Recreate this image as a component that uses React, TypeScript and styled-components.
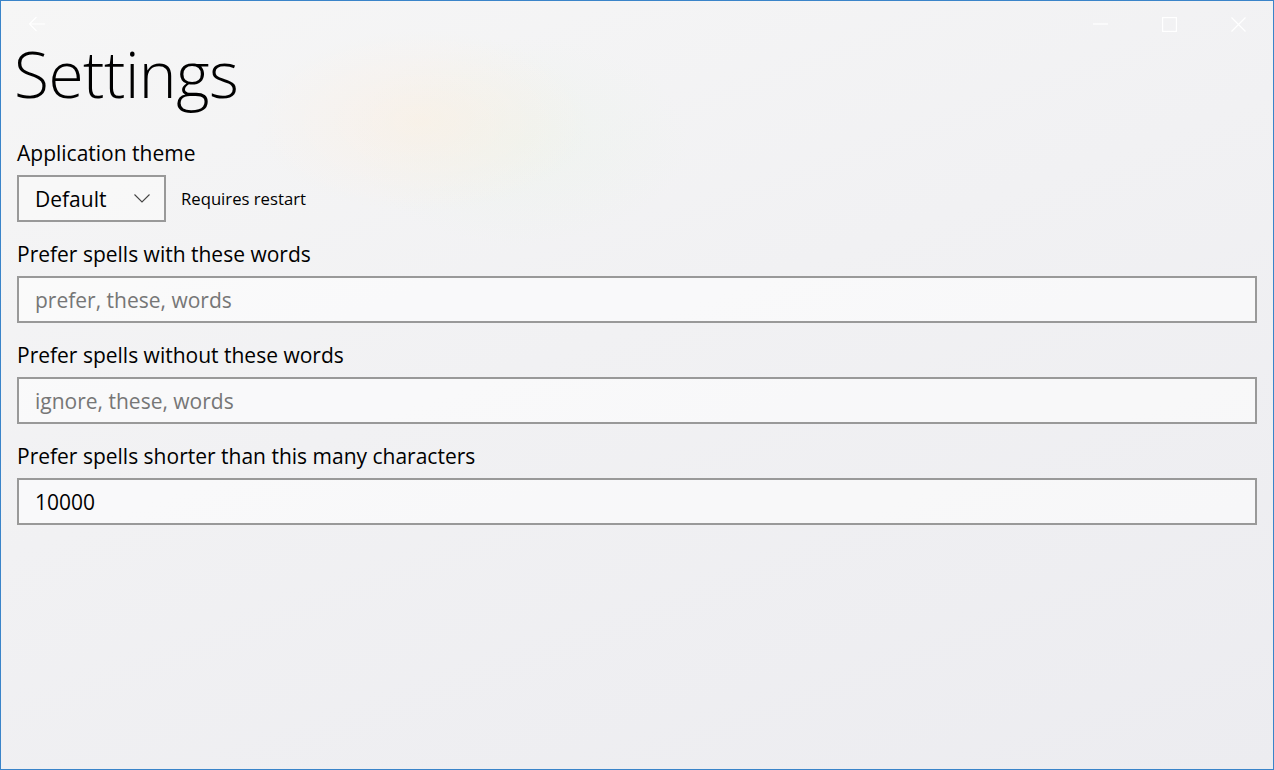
import React from "react";
import styled, { createGlobalStyle } from "styled-components";

const Global = createGlobalStyle`
  html, body { margin: 0; padding: 0; }
  body { font-family: "Open Sans", "Noto Sans", sans-serif; }
  * { box-sizing: border-box; }
`;

const Window = styled.div`
  width: 1274px;
  height: 770px;
  border: 1px solid #3a84c9;
  background:
    radial-gradient(ellipse 240px 130px at 420px 120px, rgba(255, 238, 220, 0.45), rgba(255,255,255,0) 70%),
    radial-gradient(ellipse 240px 150px at 520px 140px, rgba(232, 244, 230, 0.35), rgba(255,255,255,0) 70%),
    linear-gradient(160deg, #f6f6f6 0%, #f1f1f3 45%, #ececf0 100%);
  display: flex;
  flex-direction: column;
  overflow: hidden;
  color: #000;
`;

const TitleBar = styled.div`
  height: 46px;
  display: flex;
  align-items: center;
  justify-content: space-between;
`;

const BackButton = styled.div`
  width: 72px;
  height: 46px;
  display: flex;
  align-items: center;
  justify-content: center;
`;

const CaptionGroup = styled.div`
  display: flex;
  height: 46px;
`;

const CaptionButton = styled.div`
  width: 69px;
  height: 46px;
  display: flex;
  align-items: center;
  justify-content: center;
`;

const Content = styled.div`
  padding: 0 16px;
  display: flex;
  flex-direction: column;
`;

const Heading = styled.h1`
  margin: 0 0 0 -3px;
  font-family: "Open Sans", sans-serif;
  font-weight: 300;
  font-size: 64px;
  line-height: 54px;
  letter-spacing: -0.5px;
`;

const Label = styled.div<{ $top: number }>`
  font-size: 21px;
  line-height: 28px;
  margin-top: ${(p) => p.$top}px;
  margin-bottom: 8px;
`;

const Row = styled.div`
  display: flex;
  align-items: center;
  gap: 15px;
`;

const Combo = styled.div`
  width: 149px;
  height: 47px;
  border: 2px solid #999;
  background: rgba(255, 255, 255, 0.35);
  display: flex;
  align-items: center;
  justify-content: space-between;
  padding: 0 14px 0 16px;
  font-size: 21px;
`;

const Note = styled.span`
  font-size: 16.7px;
`;

const Field = styled.div<{ $placeholder?: boolean }>`
  height: 47px;
  border: 2px solid #999;
  background: rgba(255, 255, 255, 0.55);
  display: flex;
  align-items: center;
  padding: 0 16px;
  font-size: 21px;
  color: ${(p) => (p.$placeholder ? "#767676" : "#000")};
`;

export default function App() {
  return (
    <>
      <Global />
      <Window>
        <TitleBar>
          <BackButton>
            <svg width="18" height="16" viewBox="0 0 18 16" fill="none" stroke="#fff" strokeWidth="1.2">
              <path d="M17 8H1.5M8.5 1L1.5 8l7 7" />
            </svg>
          </BackButton>
          <CaptionGroup>
            <CaptionButton>
              <svg width="15" height="2" viewBox="0 0 15 2"><path d="M0 1h15" stroke="#fff" strokeWidth="1.2" /></svg>
            </CaptionButton>
            <CaptionButton>
              <svg width="15" height="15" viewBox="0 0 15 15" fill="none"><rect x="0.6" y="0.6" width="13.8" height="13.8" stroke="#fff" strokeWidth="1.2" /></svg>
            </CaptionButton>
            <CaptionButton>
              <svg width="15" height="15" viewBox="0 0 15 15" fill="none" stroke="#fff" strokeWidth="1.2"><path d="M0.5 0.5l14 14M14.5 0.5l-14 14" /></svg>
            </CaptionButton>
          </CaptionGroup>
        </TitleBar>
        <Content>
          <Heading>Settings</Heading>
          <Label $top={38}>Application theme</Label>
          <Row>
            <Combo>
              <span>Default</span>
              <svg width="16" height="9" viewBox="0 0 16 9" fill="none" stroke="#444" strokeWidth="1.1">
                <path d="M0.5 0.5L8 8l7.5-7.5" />
              </svg>
            </Combo>
            <Note>Requires restart</Note>
          </Row>
          <Label $top={18}>Prefer spells with these words</Label>
          <Field $placeholder>prefer, these, words</Field>
          <Label $top={18}>Prefer spells without these words</Label>
          <Field $placeholder>ignore, these, words</Field>
          <Label $top={18}>Prefer spells shorter than this many characters</Label>
          <Field>10000</Field>
        </Content>
      </Window>
    </>
  );
}
